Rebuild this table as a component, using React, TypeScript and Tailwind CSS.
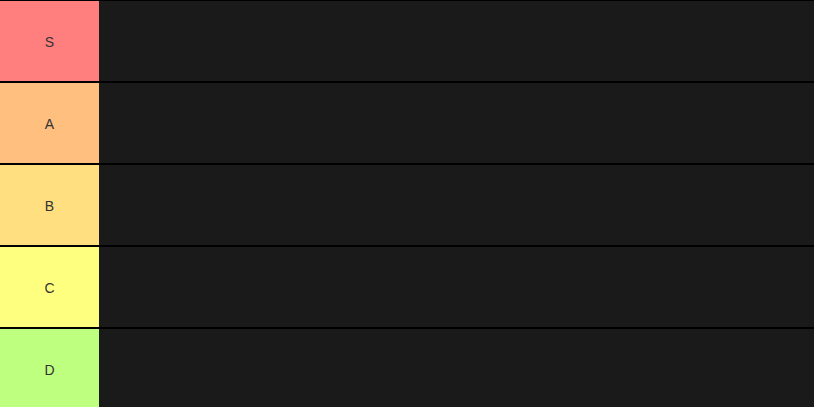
const tiers = [
  { label: "S", color: "bg-[#ff7f7f]" },
  { label: "A", color: "bg-[#ffbf7f]" },
  { label: "B", color: "bg-[#ffdf7f]" },
  { label: "C", color: "bg-[#ffff7f]" },
  { label: "D", color: "bg-[#bfff7f]" },
]

export default function App() {
  return (
    <div className="w-[814px] h-[407px] overflow-hidden bg-black pt-px flex flex-col gap-[2px]">
      {tiers.map((tier) => (
        <div key={tier.label} className="flex h-[80px] shrink-0">
          <div
            className={`${tier.color} w-[99px] shrink-0 flex items-center justify-center pt-[2px] text-[14px] text-[#333333] font-['Liberation_Sans',Arial,sans-serif]`}
          >
            {tier.label}
          </div>
          <div className="flex-1 bg-[#1a1a1a]"></div>
        </div>
      ))}
    </div>
  )
}
